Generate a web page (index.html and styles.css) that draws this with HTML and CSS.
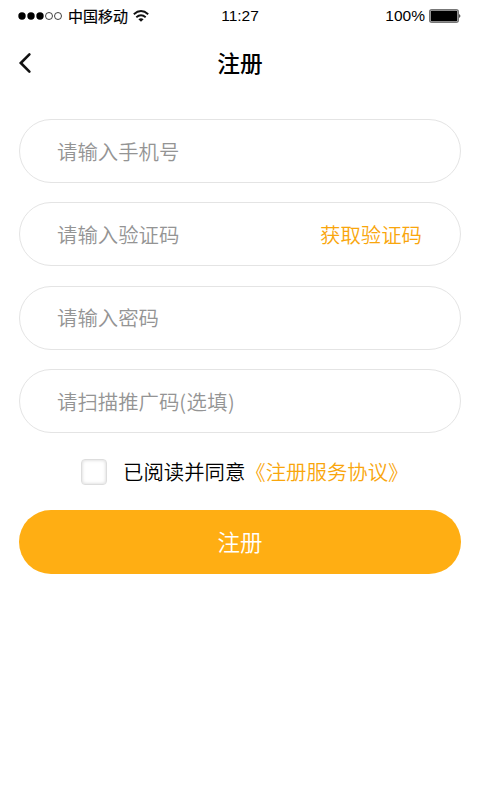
FILE: index.html
```html
<!DOCTYPE html>
<html lang="zh-CN">
<head>
<meta charset="utf-8">
<title>注册</title>
<link rel="stylesheet" href="styles.css">
</head>
<body>
<header class="status">
  <div class="carrier">
    <svg class="signal" width="44" height="10" viewBox="0 0 44 10"><circle cx="4" cy="5" r="3.7"/><circle cx="13" cy="5" r="3.7"/><circle cx="22" cy="5" r="3.7"/><circle class="ring" cx="31" cy="5" r="3.5"/><circle class="ring" cx="40" cy="5" r="3.5"/></svg>
    <span class="operator">中国移动</span>
    <svg class="wifi" width="16" height="12" viewBox="0 0 16 12"><path d="M.8 4.2Q8-2 15.2 4.2M3.3 7.2Q8 3.3 12.7 7.2"/><path class="dot" d="M5.4 9.2Q8 7.2 10.6 9.2L8 11.7z"/></svg>
  </div>
  <time class="clock">11:27</time>
  <div class="power"><span>100%</span>
    <svg width="32" height="14" viewBox="0 0 32 14"><rect class="shell" x=".75" y=".75" width="28.5" height="12.5" rx="2"/><rect x="1.8" y="1.8" width="26.4" height="10.4" rx="1"/><path d="M30.3 5Q32.3 7 30.3 9z"/></svg>
  </div>
</header>
<nav class="nav">
  <svg class="back" width="14" height="22" viewBox="0 0 14 22"><path d="M11.4 2.4L2.8 11L11.4 19.6"/></svg>
  <h1>注册</h1>
</nav>
<main class="form">
  <div class="field"><span>请输入手机号</span></div>
  <div class="field"><span>请输入验证码</span><a class="code">获取验证码</a></div>
  <div class="field"><span>请输入密码</span></div>
  <div class="field"><span>请扫描推广码<span class="optional">(选填)</span></span></div>
  <div class="agree"><i class="check"></i><span class="label">已阅读并同意</span><a class="label">《注册服务协议》</a></div>
  <button class="submit"><span class="label">注册</span></button>
</main>
</body>
</html>
```
FILE: styles.css
```css
* { box-sizing: border-box; }
body { margin: 0; background: #fff; color: #000; font-family: "Liberation Sans", "Noto Sans CJK SC", sans-serif; }
.status { display: grid; grid-template-columns: 1fr auto 1fr; align-items: center; height: 32px; padding: 0 19px 0 18px; font-size: 15.5px; }
.carrier, .power { display: flex; align-items: center; }
.power { justify-content: flex-end; gap: 3px; }
.power span { margin-right: 1px; }
.operator { margin: 0 5px 0 6px; padding-bottom: 2px; font-size: 15px; font-weight: 400; -webkit-text-stroke: .2px #000; }
.ring, .wifi path, .shell { fill: none; stroke: #111; }
.ring { stroke-width: .8; }
.shell { stroke: #777; stroke-width: 1.5; }
.wifi path { stroke-width: 1.9; }
.wifi .dot { fill: #111; stroke: none; }
.clock { padding-left: 1px; }
.nav { display: grid; grid-template-columns: 1fr auto 1fr; align-items: center; height: 62px; padding: 0 18px; }
.back path { fill: none; stroke: #111; stroke-width: 2.6; stroke-linecap: round; }
h1 { margin: 0; font-family: "Noto Sans CJK SC", sans-serif; font-size: 22.7px; line-height: 30px; padding-bottom: 1px; font-weight: 500; }
.form { padding: 25px 19px 0; font-family: "Noto Sans CJK SC", sans-serif; font-weight: 350; }
.field { display: flex; align-items: center; justify-content: space-between; height: 64px; margin-bottom: 19.4px; padding: 0 38px 1px 37px; border: 1px solid #e4e4e4; border-radius: 32px; color: #949494; font-size: 20.4px; }
.optional { letter-spacing: .4px; }
.code, .agree a { color: #f9a60c; }
.agree { display: flex; align-items: center; height: 38px; padding-left: 62px; font-size: 20.4px; }
.label { padding-bottom: 1px; }
.check { width: 26px; height: 26px; margin-right: 16px; border: 1.5px solid #ddd; border-radius: 4px; box-shadow: inset 0 0 3px 1px #e4e4e4; }
.submit { display: block; width: 100%; height: 64px; margin-top: 19px; padding: 0 0 2px; border: 0; border-radius: 32px; background: #ffae13; color: #fff; font: inherit; font-size: 22.5px; }
```
